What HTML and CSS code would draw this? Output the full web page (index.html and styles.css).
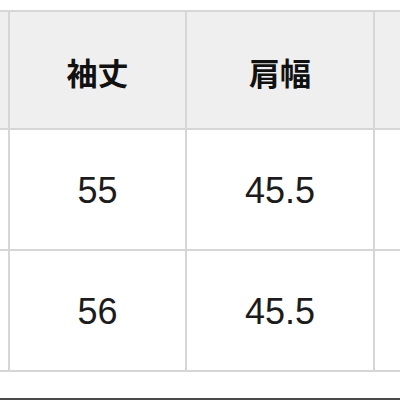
FILE: index.html
```html
<!DOCTYPE html>
<html lang="ja">
<head>
<meta charset="utf-8">
<link rel="stylesheet" href="styles.css">
</head>
<body>
<div class="page">
  <div class="wrap">
    <div class="sheet">
      <div class="cell head"></div>
      <div class="cell head">袖丈</div>
      <div class="cell head">肩幅</div>
      <div class="cell head"></div>

      <div class="cell"></div>
      <div class="cell num">55</div>
      <div class="cell num">45.5</div>
      <div class="cell"></div>

      <div class="cell"></div>
      <div class="cell num">56</div>
      <div class="cell num">45.5</div>
      <div class="cell"></div>
    </div>
  </div>
  <div class="spacer"></div>
  <div class="bottom-bar"></div>
</div>
</body>
</html>
```
FILE: styles.css
```css
html, body {
  margin: 0;
  padding: 0;
  background: #ffffff;
}
.page {
  width: 400px;
  height: 400px;
  overflow: hidden;
  display: flex;
  flex-direction: column;
}
.wrap {
  padding-top: 10px;
  overflow: hidden;
  width: 400px;
}
.sheet {
  display: grid;
  grid-template-columns: 8px 175px 186px 60px;
  grid-template-rows: 116px 119px 119px;
  gap: 2px;
  padding: 2px 0;
  background: #d6d6d6;
  width: max-content;
}
.cell {
  background: #ffffff;
  display: flex;
  align-items: center;
  justify-content: center;
  color: #1c1c1c;
}
.head {
  background: #efefef;
  font-family: "Noto Sans CJK JP", sans-serif;
  font-weight: 700;
  font-size: 31px;
  color: #111111;
  padding-top: 2px;
}
.num {
  font-family: "Liberation Sans", Arial, sans-serif;
  font-size: 36px;
  padding-top: 2px;
}
.spacer {
  flex: 1;
}
.bottom-bar {
  height: 2px;
  background: #4a4a4a;
}
```
